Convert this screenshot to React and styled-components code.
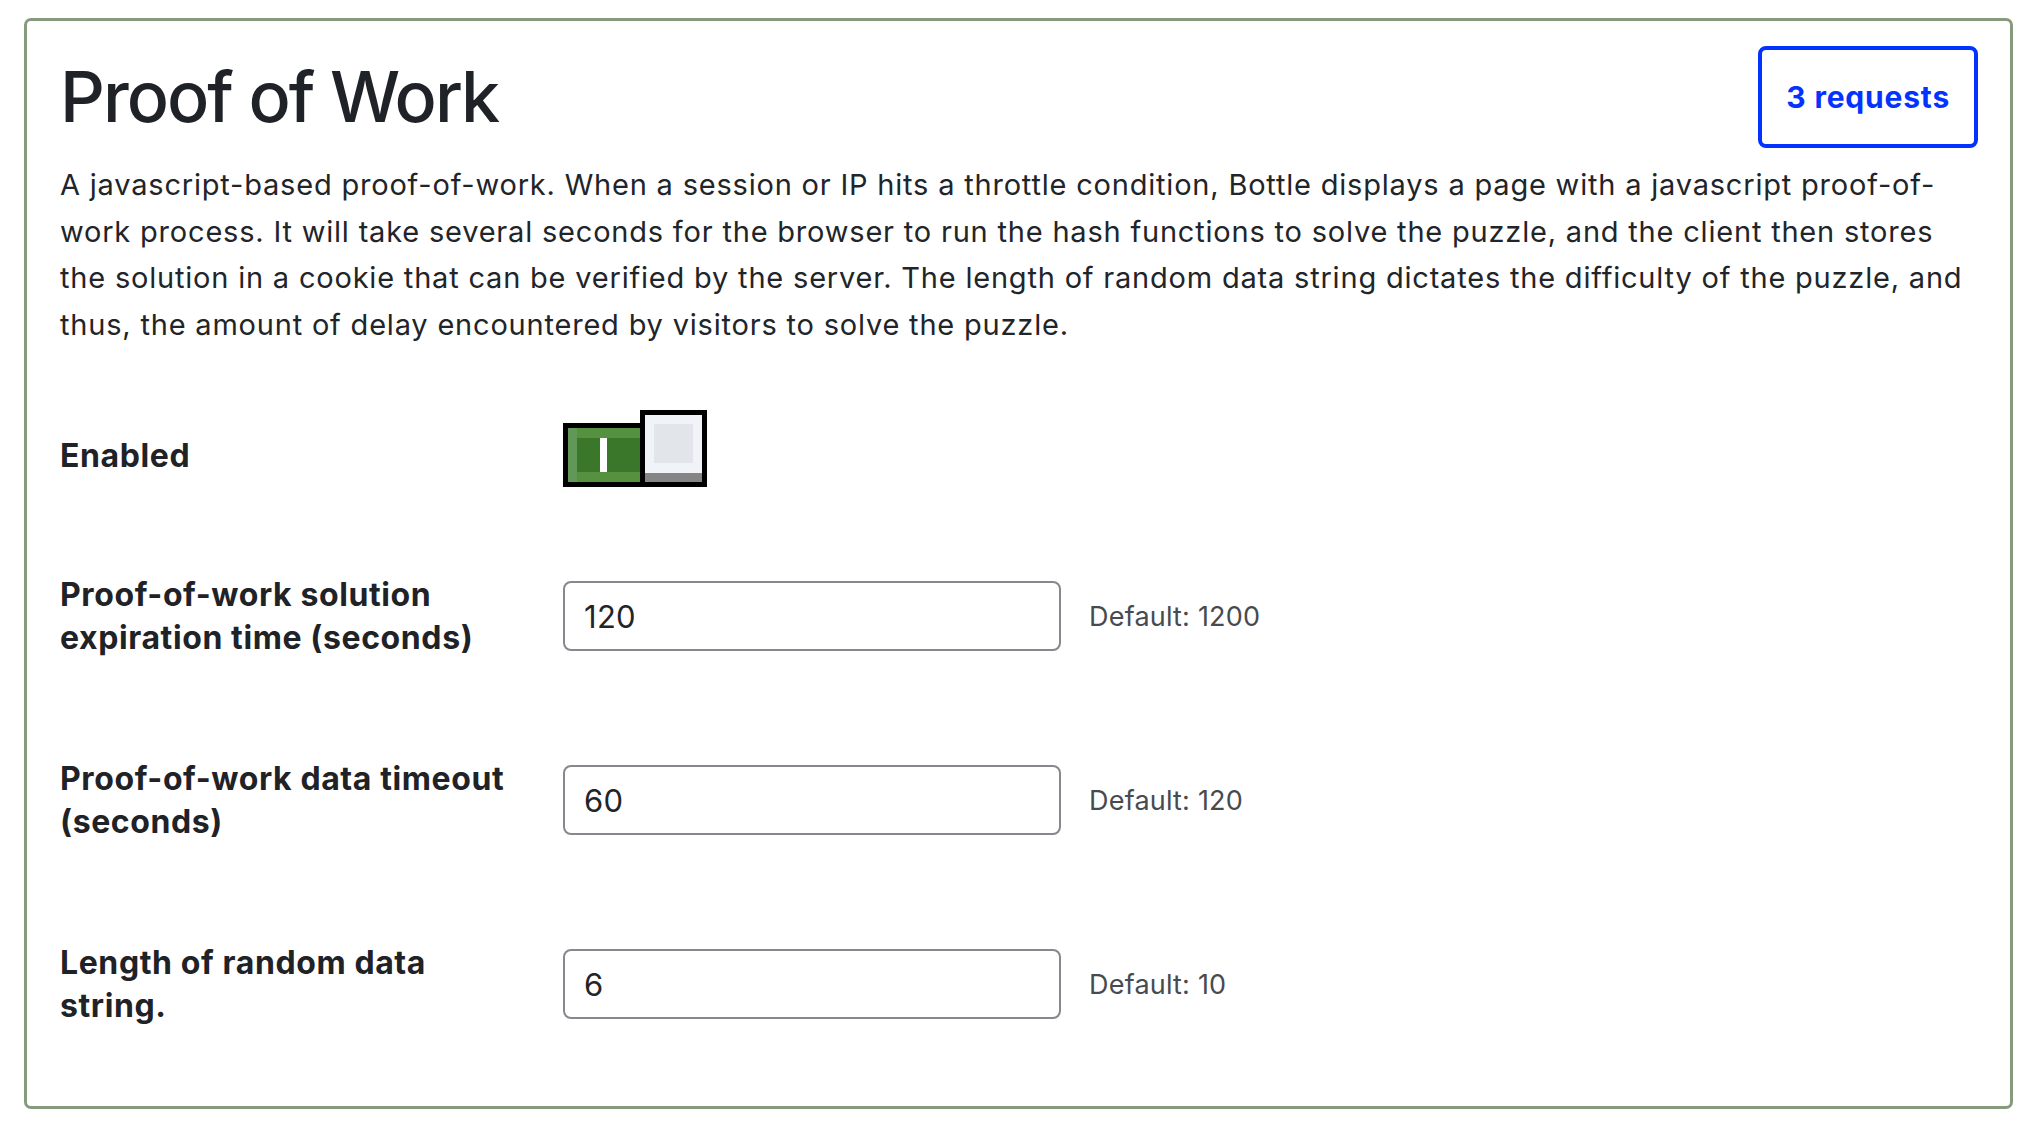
import React from "react";
import styled, { createGlobalStyle } from "styled-components";

const GlobalStyle = createGlobalStyle`
  html, body {
    margin: 0;
    padding: 0;
    background: #ffffff;
  }
  body {
    font-family: "Inter", "Liberation Sans", sans-serif;
    color: #212529;
  }
`;

const fields = [
  { label: "Proof-of-work solution expiration time (seconds)", value: "120", def: "1200" },
  { label: "Proof-of-work data timeout (seconds)", value: "60", def: "120" },
  { label: "Length of random data string.", value: "6", def: "10" },
];

const App = () => {
  return (
    <Page>
      <GlobalStyle />
      <Card>
        <Header>
          <Title>Proof of Work</Title>
          <RequestsButton>3 requests</RequestsButton>
        </Header>

        <Description>
          A javascript-based proof-of-work. When a session or IP hits a throttle condition, Bottle
          displays a page with a javascript proof-of-work process. It will take several seconds for
          the browser to run the hash functions to solve the puzzle, and the client then stores the
          solution in a cookie that can be verified by the server. The length of random data string
          dictates the difficulty of the puzzle, and thus, the amount of delay encountered by
          visitors to solve the puzzle.
        </Description>

        <Form>
          <Row $pad={37}>
            <Label>Enabled</Label>
            <Switch aria-label="Enabled">
              <Track>
                <OnMark />
              </Track>
              <Knob>
                <KnobFace />
              </Knob>
            </Switch>
          </Row>

          {fields.map((f, i) => (
            <Row key={i} $pad={49}>
              <Label>{f.label}</Label>
              <Input type="text" defaultValue={f.value} />
              <DefaultHint>Default: {f.def}</DefaultHint>
            </Row>
          ))}
        </Form>
      </Card>
    </Page>
  );
};

export default App;

// Styled Components
const Page = styled.div`
  padding: 18px 29px 20px 24px;
`;

const Card = styled.div`
  border: 3px solid #869b7e;
  border-radius: 7px;
  padding: 25px 32px 30px 33px;
  min-height: 1086px;
  box-sizing: border-box;
`;

const Header = styled.div`
  display: flex;
  align-items: center;
  justify-content: space-between;
`;

const Title = styled.h1`
  margin: 0;
  font-size: 70px;
  font-weight: 500;
  letter-spacing: -2px;
  line-height: 1;
  color: #1f2226;
`;

const RequestsButton = styled.button`
  font-family: "Inter", "Liberation Sans", sans-serif;
  font-size: 30px;
  font-weight: 700;
  letter-spacing: 0.8px;
  line-height: 36px;
  color: #0433ff;
  background: #ffffff;
  border: 4px solid #0433ff;
  border-radius: 8px;
  padding: 29px 24px;
  cursor: pointer;
`;

const Description = styled.p`
  margin: 14px 6px 0 0;
  font-size: 29px;
  letter-spacing: 0.8px;
  line-height: 46.5px;
  color: #212529;
`;

const Form = styled.div`
  margin-top: 38px;
`;

const Row = styled.div`
  display: grid;
  grid-template-columns: 503px 498px auto;
  align-items: center;
  padding: ${(p) => p.$pad}px 0;
`;

const Label = styled.div`
  padding-right: 40px;
  font-size: 32px;
  font-weight: 700;
  letter-spacing: 0.6px;
  line-height: 43px;
  color: #1f2226;
`;

const Switch = styled.div`
  display: flex;
  align-items: flex-end;
  height: 64px;
  width: 144px;
`;

const Track = styled.div`
  box-sizing: border-box;
  width: 82px;
  height: 64px;
  border: 5px solid #000;
  background: #56913f;
  box-shadow: inset 9px 0 0 #619858;
  display: flex;
  align-items: center;
  justify-content: center;
  padding: 10px 0 10px 9px;
`;

const OnMark = styled.div`
  width: 100%;
  height: 100%;
  background: #3a772b;
  display: flex;
  justify-content: center;

  &::before {
    content: "";
    width: 7px;
    height: 100%;
    background: #ffffff;
    margin-right: 10px;
  }
`;

const Knob = styled.div`
  box-sizing: border-box;
  width: 67px;
  height: 77px;
  margin-left: -5px;
  border: 5px solid #000;
  background: #f0f4f8;
  box-shadow: inset 0 -9px 0 #858585;
  display: flex;
  justify-content: center;
  padding-top: 9px;
  flex-shrink: 0;
`;

const KnobFace = styled.div`
  width: 39px;
  height: 39px;
  background: #e2e6ea;
`;

const Input = styled.input`
  box-sizing: border-box;
  width: 498px;
  height: 70px;
  border: 2px solid #85888c;
  border-radius: 8px;
  padding: 0 19px;
  font-family: "Inter", "Liberation Sans", sans-serif;
  font-size: 31px;
  letter-spacing: 0.3px;
  color: #212529;
  background: #ffffff;
  outline: none;
`;

const DefaultHint = styled.div`
  margin-left: 28px;
  font-size: 27px;
  letter-spacing: 0.2px;
  color: #474b50;
`;
